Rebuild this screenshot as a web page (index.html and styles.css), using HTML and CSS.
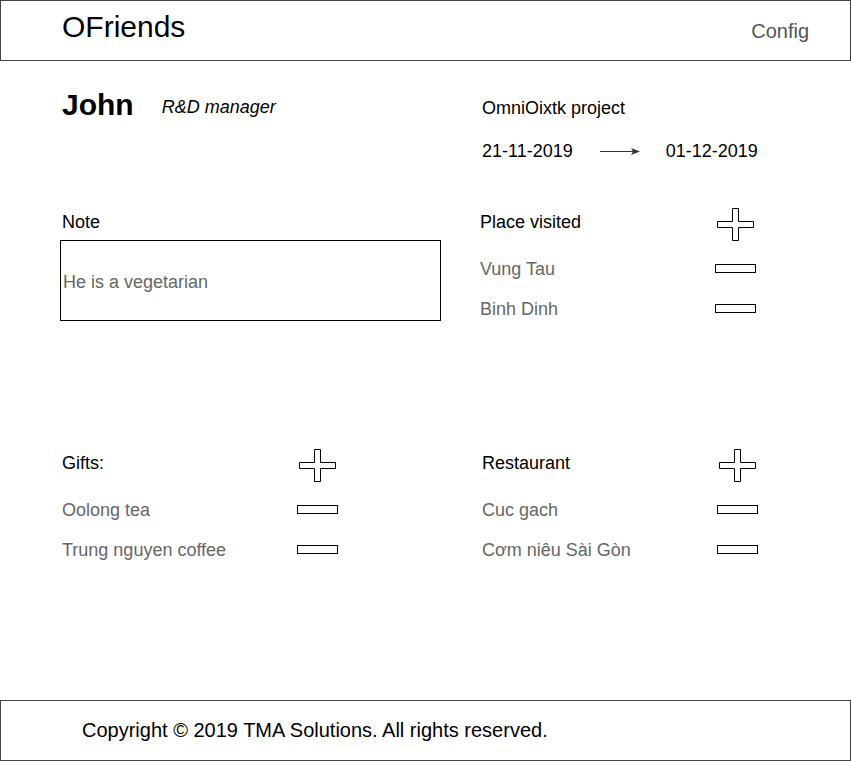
FILE: index.html
```html
<!DOCTYPE html>
<html lang="en">
<head>
<meta charset="utf-8">
<title>OFriends</title>
<link rel="stylesheet" href="styles.css">
</head>
<body>
<div class="page">
  <header class="topbar">
    <div class="brand">OFriends</div>
    <div class="config">Config</div>
  </header>

  <main class="content">
    <section class="row row-profile">
      <div class="person">
        <h1 class="name">John</h1>
        <span class="role">R&amp;D manager</span>
      </div>
      <div class="project">
        <div class="project-name">OmniOixtk project</div>
        <div class="dates">
          <span>21-11-2019</span>
          <svg class="arrow" width="40" height="9" viewBox="0 0 40 9">
            <line x1="0" y1="4.5" x2="34" y2="4.5" stroke="#333" stroke-width="1"/>
            <polygon points="31,1 40,4.5 31,8 33,4.5" fill="#333"/>
          </svg>
          <span>01-12-2019</span>
        </div>
      </div>
    </section>

    <section class="row row-notes">
      <div class="note">
        <div class="label">Note</div>
        <div class="note-box">He is a vegetarian</div>
      </div>
      <div class="list list-shift">
        <div class="list-head">
          <span class="label">Place visited</span>
          <svg class="plus" width="37" height="33" viewBox="0 0 37 33"><polygon points="15.5,0.5 21.5,0.5 21.5,13.5 36.5,13.5 36.5,19.5 21.5,19.5 21.5,32.5 15.5,32.5 15.5,19.5 0.5,19.5 0.5,13.5 15.5,13.5" fill="#fff" stroke="#000" stroke-width="1" stroke-linejoin="round"/></svg>
        </div>
        <ul class="items">
          <li class="item"><span>Vung Tau</span><svg class="minus" width="41" height="9" viewBox="0 0 41 9"><rect x="0.5" y="0.5" width="40" height="8" fill="#fff" stroke="#000" stroke-width="1"/></svg></li>
          <li class="item"><span>Binh Dinh</span><svg class="minus" width="41" height="9" viewBox="0 0 41 9"><rect x="0.5" y="0.5" width="40" height="8" fill="#fff" stroke="#000" stroke-width="1"/></svg></li>
        </ul>
      </div>
    </section>

    <section class="row row-lists">
      <div class="list">
        <div class="list-head">
          <span class="label">Gifts:</span>
          <svg class="plus" width="37" height="33" viewBox="0 0 37 33"><polygon points="15.5,0.5 21.5,0.5 21.5,13.5 36.5,13.5 36.5,19.5 21.5,19.5 21.5,32.5 15.5,32.5 15.5,19.5 0.5,19.5 0.5,13.5 15.5,13.5" fill="#fff" stroke="#000" stroke-width="1" stroke-linejoin="round"/></svg>
        </div>
        <ul class="items">
          <li class="item"><span>Oolong tea</span><svg class="minus" width="41" height="9" viewBox="0 0 41 9"><rect x="0.5" y="0.5" width="40" height="8" fill="#fff" stroke="#000" stroke-width="1"/></svg></li>
          <li class="item"><span>Trung nguyen coffee</span><svg class="minus" width="41" height="9" viewBox="0 0 41 9"><rect x="0.5" y="0.5" width="40" height="8" fill="#fff" stroke="#000" stroke-width="1"/></svg></li>
        </ul>
      </div>
      <div class="list">
        <div class="list-head">
          <span class="label">Restaurant</span>
          <svg class="plus" width="37" height="33" viewBox="0 0 37 33"><polygon points="15.5,0.5 21.5,0.5 21.5,13.5 36.5,13.5 36.5,19.5 21.5,19.5 21.5,32.5 15.5,32.5 15.5,19.5 0.5,19.5 0.5,13.5 15.5,13.5" fill="#fff" stroke="#000" stroke-width="1" stroke-linejoin="round"/></svg>
        </div>
        <ul class="items">
          <li class="item"><span>Cuc gach</span><svg class="minus" width="41" height="9" viewBox="0 0 41 9"><rect x="0.5" y="0.5" width="40" height="8" fill="#fff" stroke="#000" stroke-width="1"/></svg></li>
          <li class="item"><span>Cơm niêu Sài Gòn</span><svg class="minus" width="41" height="9" viewBox="0 0 41 9"><rect x="0.5" y="0.5" width="40" height="8" fill="#fff" stroke="#000" stroke-width="1"/></svg></li>
        </ul>
      </div>
    </section>
  </main>

  <footer class="footer">Copyright © 2019 TMA Solutions. All rights reserved.</footer>
</div>
</body>
</html>
```

FILE: styles.css
```css
* { box-sizing: border-box; }

html, body {
  margin: 0;
  padding: 0;
  background: #fff;
}

body {
  font-family: "Liberation Sans", Arial, Helvetica, sans-serif;
  color: #000;
}

.page {
  display: flex;
  flex-direction: column;
  height: 100vh;
}

/* Header */
.topbar {
  height: 61px;
  flex: none;
  border: 1px solid #444;
  display: flex;
  justify-content: space-between;
  align-items: flex-start;
  padding: 0 41px 0 61px;
}

.brand {
  font-size: 30px;
  line-height: 34px;
  margin-top: 9px;
}

.config {
  font-size: 20px;
  line-height: 24px;
  margin-top: 18px;
  color: #555;
}

/* Content */
.content {
  padding: 27px 0 0 62px;
}

.row {
  display: grid;
  grid-template-columns: 420px 276px;
  align-items: start;
}

.row-notes { margin-top: 46px; }
.row-lists { margin-top: 120px; }

.person {
  display: flex;
  align-items: flex-start;
}

.name {
  margin: 0;
  font-size: 30px;
  line-height: 34px;
  font-weight: bold;
}

.role {
  margin: 8px 0 0 28px;
  font-size: 18px;
  line-height: 22px;
  font-style: italic;
}

.project {
  font-size: 18px;
  line-height: 22px;
}

.project-name { margin-top: 9px; }

.dates {
  display: flex;
  align-items: center;
  margin-top: 21px;
}

.arrow {
  display: block;
  margin: 0 26px 0 27px;
}

.label {
  font-size: 18px;
  line-height: 22px;
}

.note { margin-top: 3px; }

.note-box {
  margin: 7px 0 0 -2px;
  width: 381px;
  height: 81px;
  border: 1px solid #000;
  display: flex;
  align-items: center;
  padding: 3px 0 0 2px;
  font-size: 18px;
  color: #666;
}

/* Lists */
.list { width: 276px; }
.list-shift { margin-left: -2px; }

.list-head {
  height: 33px;
  display: flex;
  justify-content: space-between;
  align-items: flex-start;
}

.list-head .label { margin-top: 3px; }

.plus {
  display: block;
  margin-right: 2px;
}

.items {
  list-style: none;
  margin: 8px 0 0;
  padding: 0;
}

.item {
  height: 40px;
  display: flex;
  justify-content: space-between;
  align-items: center;
  font-size: 18px;
  color: #666;
}

.minus {
  display: block;
  margin-top: -2px;
}

/* Footer */
.footer {
  margin-top: auto;
  margin-bottom: 1px;
  height: 61px;
  flex: none;
  border: 1px solid #444;
  display: flex;
  align-items: center;
  padding-left: 81px;
  font-size: 20px;
}
```
